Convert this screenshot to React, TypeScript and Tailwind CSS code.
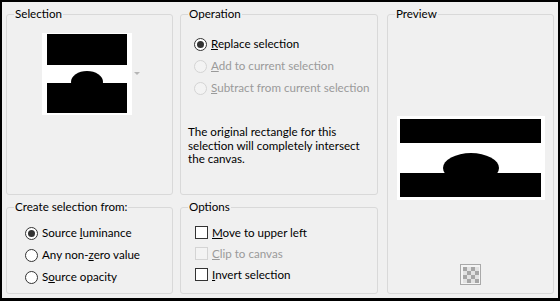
import React from "react";

function Group({
  title,
  className,
  children,
}: {
  title: string;
  className: string;
  children?: React.ReactNode;
}) {
  return (
    <fieldset className={`border border-[#d9d9d9] rounded-[3px] ${className}`}>
      <legend className="ml-[7px] px-[1px] h-[16px] leading-[16px] text-black">{title}</legend>
      {children}
    </fieldset>
  );
}

function Radio({
  label,
  checked,
  disabled,
}: {
  label: React.ReactNode;
  checked?: boolean;
  disabled?: boolean;
}) {
  return (
    <div className="flex items-center h-[22px] whitespace-nowrap">
      <span
        className={`w-[13px] h-[13px] shrink-0 rounded-full border flex items-center justify-center ${
          disabled ? "border-[#d4d4d4] bg-[#f3f3f3]" : "border-[#333333] bg-white"
        }`}
      >
        {checked && <span className="w-[7px] h-[7px] rounded-full bg-[#333333]" />}
      </span>
      <span className={`ml-[4px] ${disabled ? "text-[#9a9a9a]" : "text-black"}`}>{label}</span>
    </div>
  );
}

function Check({ label, disabled }: { label: React.ReactNode; disabled?: boolean }) {
  return (
    <div className="flex items-center h-[21px] whitespace-nowrap">
      <span
        className={`w-[13px] h-[13px] shrink-0 border ${
          disabled ? "border-[#d4d4d4] bg-[#f3f3f3]" : "border-[#333333] bg-white"
        }`}
      />
      <span className={`ml-[4px] ${disabled ? "text-[#9a9a9a]" : "text-black"}`}>{label}</span>
    </div>
  );
}

function Thumb() {
  return (
    <svg width="90" height="82" viewBox="0 0 90 82">
      <rect width="90" height="82" fill="#fff" />
      <rect x="5" y="1" width="80" height="31" fill="#000" />
      <ellipse cx="45" cy="49" rx="16" ry="11" fill="#000" />
      <rect x="5" y="50" width="80" height="30" fill="#000" />
    </svg>
  );
}

function PreviewImage() {
  return (
    <svg width="148" height="84" viewBox="0 0 148 84">
      <rect width="148" height="84" fill="#fff" />
      <rect x="3" y="3" width="141" height="24" fill="#000" />
      <ellipse cx="74" cy="52" rx="28" ry="15" fill="#000" />
      <rect x="3" y="57" width="141" height="24" fill="#000" />
    </svg>
  );
}

function Checker() {
  return (
    <svg width="21" height="21" viewBox="0 0 21 21">
      <rect x="0.5" y="0.5" width="20" height="20" fill="#f4f4f4" stroke="#a9a9a9" />
      {[0, 1, 2, 3].map((r) =>
        [0, 1, 2, 3].map((c) => (
          <rect
            key={`${r}-${c}`}
            x={3 + c * 4}
            y={3 + r * 4}
            width="4"
            height="4"
            fill={(r + c) % 2 === 0 ? "#a6a6a6" : "#e2e2e2"}
          />
        ))
      )}
    </svg>
  );
}

export default function App() {
  return (
    <div className="w-[560px] h-[301px] bg-[#f0f0f0] border-x-2 border-t-2 border-b-[3px] border-black font-['Lato',sans-serif] text-[11.6px] flex px-[4px] pt-[4px]">
      <div className="w-[167px] flex flex-col">
        <Group title="Selection" className="h-[189px]">
          <div className="flex items-center pl-[35px] mt-[11px]">
            <Thumb />
            <svg width="6" height="4" viewBox="0 0 6 4" className="ml-[2px]">
              <path d="M0 0 L6 0 L3 3 Z" fill="#b5b5b5" />
            </svg>
          </div>
        </Group>
        <Group title="Create selection from:" className="h-[95px] mt-[4px]">
          <div className="pl-[18px] mt-[7px]">
            <Radio
              checked
              label={
                <>
                  Source <u>l</u>uminance
                </>
              }
            />
            <Radio
              label={
                <>
                  Any non-<u>z</u>ero value
                </>
              }
            />
            <Radio
              label={
                <>
                  S<u>o</u>urce opacity
                </>
              }
            />
          </div>
        </Group>
      </div>

      <div className="w-[198px] ml-[7px] flex flex-col">
        <Group title="Operation" className="h-[189px]">
          <div className="pl-[13px] mt-[11px]">
            <Radio
              checked
              label={
                <>
                  <u>R</u>eplace selection
                </>
              }
            />
            <Radio
              disabled
              label={
                <>
                  <u>A</u>dd to current selection
                </>
              }
            />
            <Radio
              disabled
              label={
                <>
                  <u>S</u>ubtract from current selection
                </>
              }
            />
          </div>
          <p className="pl-[7px] mt-[26px] leading-[13.5px] text-black whitespace-nowrap">
            The original rectangle for this
            <br />
            selection will completely intersect
            <br />
            the canvas.
          </p>
        </Group>
        <Group title="Options" className="h-[95px] mt-[4px]">
          <div className="pl-[14px] mt-[7px]">
            <Check
              label={
                <>
                  <u>M</u>ove to upper left
                </>
              }
            />
            <Check
              disabled
              label={
                <>
                  <u>C</u>lip to canvas
                </>
              }
            />
            <Check
              label={
                <>
                  <u>I</u>nvert selection
                </>
              }
            />
          </div>
        </Group>
      </div>

      <div className="w-[167px] ml-[9px]">
        <Group title="Preview" className="h-[288px]">
          <div className="flex flex-col items-center">
            <div className="mt-[94px]">
              <PreviewImage />
            </div>
            <div className="mt-[64px]">
              <Checker />
            </div>
          </div>
        </Group>
      </div>
    </div>
  );
}
